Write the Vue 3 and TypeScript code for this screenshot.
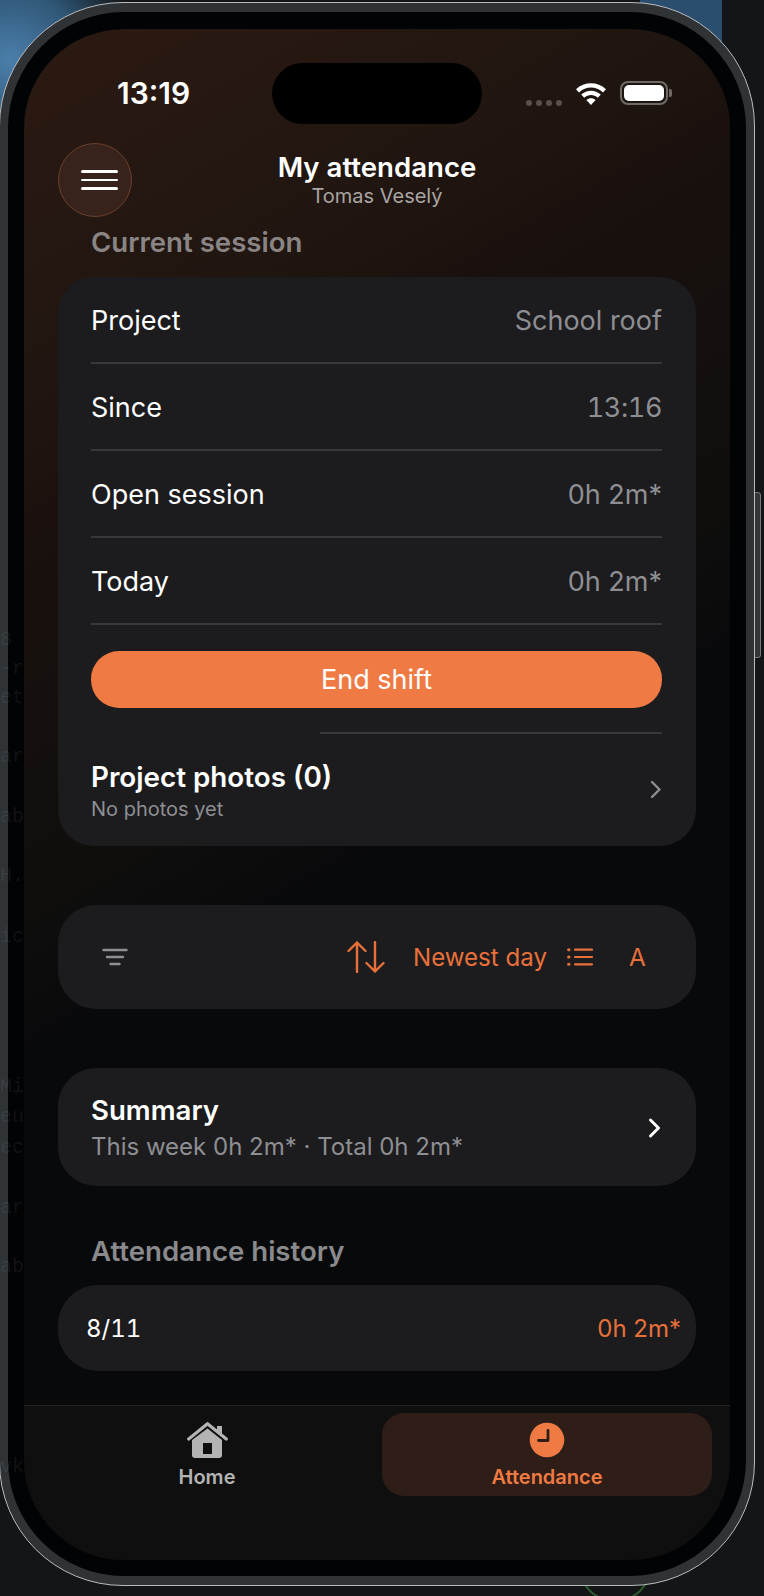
<template>
  <div class="desk">
    <div class="avatar-peek"></div>
    <div class="side-key"></div>
    <div class="phone">
      <div class="screen">
        <div class="island"></div>
        <div class="status">
          <span class="time">13:19</span>
          <div class="status-right">
            <div class="dots"><i></i><i></i><i></i><i></i></div>
            <svg class="wifi" width="32" height="24" viewBox="0 0 32 24">
              <path d="M1 8.2 C9.5 0.3 22.5 0.3 31 8.2 L28 11.4 C21 5 11 5 4 11.4Z" fill="#fff" />
              <path d="M6.2 13.6 C12 8.4 20 8.4 25.8 13.6 L22.8 16.8 C18.6 13.2 13.4 13.2 9.2 16.8Z" fill="#fff" />
              <path d="M11.4 19 C14 16.8 18 16.8 20.6 19 L16 24Z" fill="#fff" />
            </svg>
            <div class="battery"><div class="battery-fill"></div></div>
            <div class="battery-cap"></div>
          </div>
        </div>

        <header class="head">
          <button class="menu">
            <span></span><span></span><span></span>
          </button>
          <div class="head-title">
            <div class="title">My attendance</div>
            <div class="subtitle">Tomas Veselý</div>
          </div>
        </header>

        <main class="content">
          <h2 class="section faded">Current session</h2>
          <section class="card session">
            <div v-for="row in rows" :key="row.label" class="row">
              <span>{{ row.label }}</span>
              <span class="value" :class="{ clock: row.label === 'Since' }">{{ row.value }}</span>
            </div>
            <button class="end-shift">End shift</button>
            <div class="short-line"></div>
            <div class="photos">
              <div>
                <div class="photos-title">Project photos (0)</div>
                <div class="photos-sub">No photos yet</div>
              </div>
              <svg class="photos-chevron" width="12" height="19" viewBox="0 0 12 19" fill="none" stroke="#8e8e93" stroke-width="2.4" stroke-linecap="round" stroke-linejoin="round">
                <path d="M2 2 L9.5 9.5 L2 17" />
              </svg>
            </div>
          </section>

          <section class="card toolbar">
            <svg class="filter" width="26" height="18" viewBox="0 0 26 18" stroke="#8f8f92" stroke-width="2.4" stroke-linecap="round">
              <path d="M1.5 2 H24.5 M5 9 H21 M8.5 16 H17.5" />
            </svg>
            <svg class="sort" width="38" height="32" viewBox="0 0 38 32" fill="none" stroke="#e8703a" stroke-width="2.4" stroke-linecap="round" stroke-linejoin="round">
              <path d="M10 31 V1.5 M1.5 10 L10 1.5 L18.5 10" />
              <path d="M28 1 V30.5 M19.5 22 L28 30.5 L36.5 22" />
            </svg>
            <span class="sort-label">Newest day</span>
            <svg class="list" width="26" height="18" viewBox="0 0 26 18" stroke="#e8703a" stroke-width="2.2" stroke-linecap="round">
              <path d="M8 1.7 H25 M8 9 H25 M8 16.3 H25" />
              <path d="M1.6 1.7 H2 M1.6 9 H2 M1.6 16.3 H2" stroke-width="3" />
            </svg>
            <span class="letter">A</span>
          </section>

          <section class="card summary">
            <div>
              <div class="summary-title">Summary</div>
              <div class="summary-sub">This week 0h 2m* · Total 0h 2m*</div>
            </div>
            <svg width="14" height="22" viewBox="0 0 14 22" fill="none" stroke="#fff" stroke-width="3" stroke-linecap="round" stroke-linejoin="round">
              <path d="M2.5 3 L10.5 11 L2.5 19" />
            </svg>
          </section>

          <h2 class="section">Attendance history</h2>
          <section class="card history">
            <span class="day">8/11</span>
            <span class="accent">0h 2m*</span>
          </section>
        </main>

        <nav class="tabs">
          <div class="tab">
            <svg width="41" height="36" viewBox="0 0 41 36">
              <path d="M1.7 17 L20.5 1.7 L39.3 17" fill="none" stroke="#b3b3b3" stroke-width="3.2" stroke-linecap="round" stroke-linejoin="round" />
              <path d="M30 4 H35 V12 L30 8Z" fill="#b3b3b3" />
              <path fill-rule="evenodd" d="M20.5 6.4 L35 18 V33 Q35 36 32 36 H8 Q5 36 5 33 V18Z M16 21 V32 H25 V21Z" fill="#b3b3b3" />
            </svg>
            <span>Home</span>
          </div>
          <div class="tab active">
            <svg width="36" height="36" viewBox="0 0 36 36">
              <circle cx="18" cy="18" r="17.3" fill="#f07a43" />
              <path d="M19 8.5 V18.5 H9.5" fill="none" stroke="#2e1e17" stroke-width="2.8" stroke-linecap="round" stroke-linejoin="round" />
            </svg>
            <span>Attendance</span>
          </div>
        </nav>
      </div>
      <div class="ghost">
        <span v-for="g in ghostText" :key="g.top" :style="{ top: g.top + 'px' }">{{ g.text }}</span>
      </div>
    </div>
  </div>
</template>

<script setup lang="ts">
interface Row {
  label: string;
  value: string;
}

const rows: Row[] = [
  { label: 'Project', value: 'School roof' },
  { label: 'Since', value: '13:16' },
  { label: 'Open session', value: '0h 2m*' },
  { label: 'Today', value: '0h 2m*' },
];

// window behind the phone shows faintly through the bezel
const ghostText = [
  { top: 625, text: '8' },
  { top: 654, text: '-r' },
  { top: 683, text: 'et' },
  { top: 742, text: 'ar' },
  { top: 802, text: 'ab' },
  { top: 861, text: 'H.' },
  { top: 922, text: 'ic' },
  { top: 1072, text: 'Mi' },
  { top: 1102, text: 'eu' },
  { top: 1133, text: 'ec' },
  { top: 1193, text: 'ar' },
  { top: 1252, text: 'ab' },
  { top: 1452, text: 'vk' },
];
</script>

<style>
html,
body {
  margin: 0;
  background: #141516;
}
</style>

<style scoped>
.desk {
  position: relative;
  width: 764px;
  height: 1596px;
  overflow: hidden;
  background:
    radial-gradient(circle at 10px 60px, #4b7fab 0, #2f5676 70px, rgba(47, 86, 118, 0) 130px),
    linear-gradient(90deg, rgba(0, 0, 0, 0) 640px, #2c4e6e 640px, #2c4e6e 722px, rgba(0, 0, 0, 0) 722px) 0 0 / 100% 90px no-repeat,
    #141516;
  padding-top: 2px;
  box-sizing: border-box;
  font-family: Inter, 'Liberation Sans', sans-serif;
  color: #fff;
}
.avatar-peek {
  position: absolute;
  left: 578px;
  top: 1528px;
  width: 74px;
  height: 74px;
  box-sizing: border-box;
  border-radius: 50%;
  border: 2px solid #2c5a30;
}
.side-key {
  position: absolute;
  left: 750px;
  top: 492px;
  width: 11px;
  height: 166px;
  box-sizing: border-box;
  border: 1px solid #77797a;
  border-radius: 3px;
  background: #333537;
}
.phone {
  position: relative;
  width: 756px;
  height: 1584px;
  margin-left: -1px;
  box-sizing: border-box;
  padding: 9px 8px;
  border-radius: 124px;
  background: #2f3336;
  border: 1px solid #b9bcbe;
}
.ghost {
  position: absolute;
  left: 0;
  top: 0;
  width: 24px;
  height: 100%;
  pointer-events: none;
}
.ghost span {
  position: absolute;
  left: 0;
  font: 20px/24px 'Liberation Mono', monospace;
  color: rgba(255, 255, 255, 0.07);
}
.screen {
  position: relative;
  height: 100%;
  box-sizing: border-box;
  border: 16px solid #020304;
  border-top-width: 17px;
  border-radius: 116px;
  background-clip: padding-box;
  background-image: linear-gradient(150deg, #2c1a12 0, #1f1510 350px, #1a110e 436px, #0f0e0d 770px, #08090b 900px);
  background-color: #08090b;
  display: flex;
  flex-direction: column;
  overflow: hidden;
}
.island {
  position: absolute;
  left: 248px;
  top: 34px;
  width: 210px;
  height: 61px;
  border-radius: 31px;
  background: #000;
}
.status {
  display: flex;
  justify-content: space-between;
  align-items: flex-start;
  height: 114px;
  flex: none;
  box-sizing: border-box;
  padding: 46px 58px 0 93px;
}
.time {
  font-size: 30px;
  font-weight: 600;
  line-height: 36px;
}
.status-right {
  display: flex;
  align-items: center;
  padding-top: 5px;
}
.dots {
  display: flex;
  gap: 4px;
  margin-top: 20px;
  margin-right: 13px;
}
.dots i {
  width: 6px;
  height: 6px;
  border-radius: 50%;
  background: #5a4f4c;
}
.battery {
  margin-left: 13px;
  width: 48px;
  height: 24px;
  box-sizing: border-box;
  border: 2px solid #6f6a68;
  border-radius: 8px;
  padding: 2px;
}
.battery-fill {
  height: 100%;
  background: #fff;
  border-radius: 5px;
}
.battery-cap {
  width: 3px;
  height: 8px;
  margin-left: 1px;
  border-radius: 0 2px 2px 0;
  background: #6f6a68;
}
.head {
  position: relative;
  height: 88px;
  flex: none;
  padding-left: 34px;
}
.menu {
  width: 74px;
  height: 74px;
  padding: 0 0 0 8px;
  box-sizing: border-box;
  border-radius: 50%;
  border: 1px solid #6b402c;
  background: #38231c;
  display: flex;
  flex-direction: column;
  align-items: center;
  justify-content: center;
  gap: 6px;
}
.menu span {
  display: block;
  width: 37px;
  height: 2.6px;
  border-radius: 2px;
  background: #fff;
}
.head-title {
  position: absolute;
  left: 0;
  right: 0;
  top: 7px;
  text-align: center;
}
.title {
  font-size: 27.6px;
  font-weight: 600;
  line-height: 34px;
}
.subtitle {
  font-size: 20px;
  line-height: 25px;
  color: #a9a5a3;
}
.content {
  flex: 1;
  padding: 0 34px;
  display: flex;
  flex-direction: column;
  min-height: 0;
}
.section {
  margin: 0 0 0 33px;
  font-size: 27.6px;
  font-weight: 600;
  line-height: 32px;
  color: #8a8a8d;
}
.faded {
  margin-top: -5px;
  height: 51px;
  flex: none;
  color: #8a8585;
}
.card {
  background: #1c1c1e;
  border-radius: 38px;
}
.session {
  padding: 0 34px 0 33px;
  height: 569px;
  flex: none;
  box-sizing: border-box;
  border-radius: 36px;
}
.row {
  display: flex;
  justify-content: space-between;
  align-items: center;
  box-sizing: border-box;
  height: 87px;
  padding-top: 2px;
  font-size: 27px;
  border-bottom: 2px solid #38383a;
}
.value {
  color: #8e8e93;
}
.clock {
  font-variant-numeric: tabular-nums;
  letter-spacing: -0.4px;
}
.end-shift {
  display: block;
  width: 100%;
  height: 57px;
  margin-top: 26px;
  border: none;
  border-radius: 28px;
  background: #f07a43;
  color: #fff;
  font: 400 27px Inter, 'Liberation Sans', sans-serif;
}
.short-line {
  height: 2px;
  margin: 24px 0 0 229px;
  background: #38383a;
}
.photos {
  display: flex;
  justify-content: space-between;
  align-items: center;
  padding-top: 26px;
}
.photos-chevron {
  margin-top: -4px;
}
.photos-title {
  font-size: 27.8px;
  font-weight: 600;
  line-height: 34px;
}
.photos-sub {
  font-size: 20px;
  line-height: 26px;
  margin-top: 2px;
  color: #8e8e93;
}
.toolbar {
  margin-top: 59px;
  height: 104px;
  flex: none;
  display: flex;
  align-items: center;
  padding-left: 44px;
  color: #e8703a;
}
.sort {
  margin-left: 219px;
}
.sort-label {
  margin-left: 28px;
  font-size: 24.1px;
}
.list {
  margin-left: 20px;
}
.letter {
  margin-left: 36px;
  font-size: 24.3px;
}
.summary {
  margin-top: 59px;
  height: 118px;
  flex: none;
  box-sizing: border-box;
  display: flex;
  justify-content: space-between;
  align-items: center;
  padding: 1px 34px 0 33px;
}
.summary-title {
  font-size: 27.6px;
  font-weight: 600;
  line-height: 34px;
}
.summary-sub {
  font-size: 24px;
  line-height: 32px;
  margin-top: 4px;
  color: #8e8e93;
}
.content > .section:not(.faded) {
  margin-top: 49px;
  margin-bottom: 18px;
}
.history {
  height: 86px;
  flex: none;
  border-radius: 40px;
  display: flex;
  justify-content: space-between;
  align-items: center;
  padding: 0 15px 0 28px;
  font-size: 24px;
}
.day {
  font-variant-numeric: tabular-nums;
}
.accent {
  color: #e8703a;
}
.tabs {
  flex: none;
  height: 155px;
  box-sizing: border-box;
  border-top: 1px solid #232324;
  background: #0f0f0f;
  display: grid;
  grid-template-columns: 330px 330px;
  column-gap: 10px;
  padding: 7px 0 0 18px;
}
.tab {
  height: 83px;
  border-radius: 22px;
  display: flex;
  flex-direction: column;
  align-items: center;
  padding-top: 9px;
  box-sizing: border-box;
  gap: 7px;
  font-size: 20px;
  line-height: 24px;
  font-weight: 600;
  color: #b3b3b3;
}
.active {
  background: #2e1e17;
  color: #f07a43;
}
</style>
